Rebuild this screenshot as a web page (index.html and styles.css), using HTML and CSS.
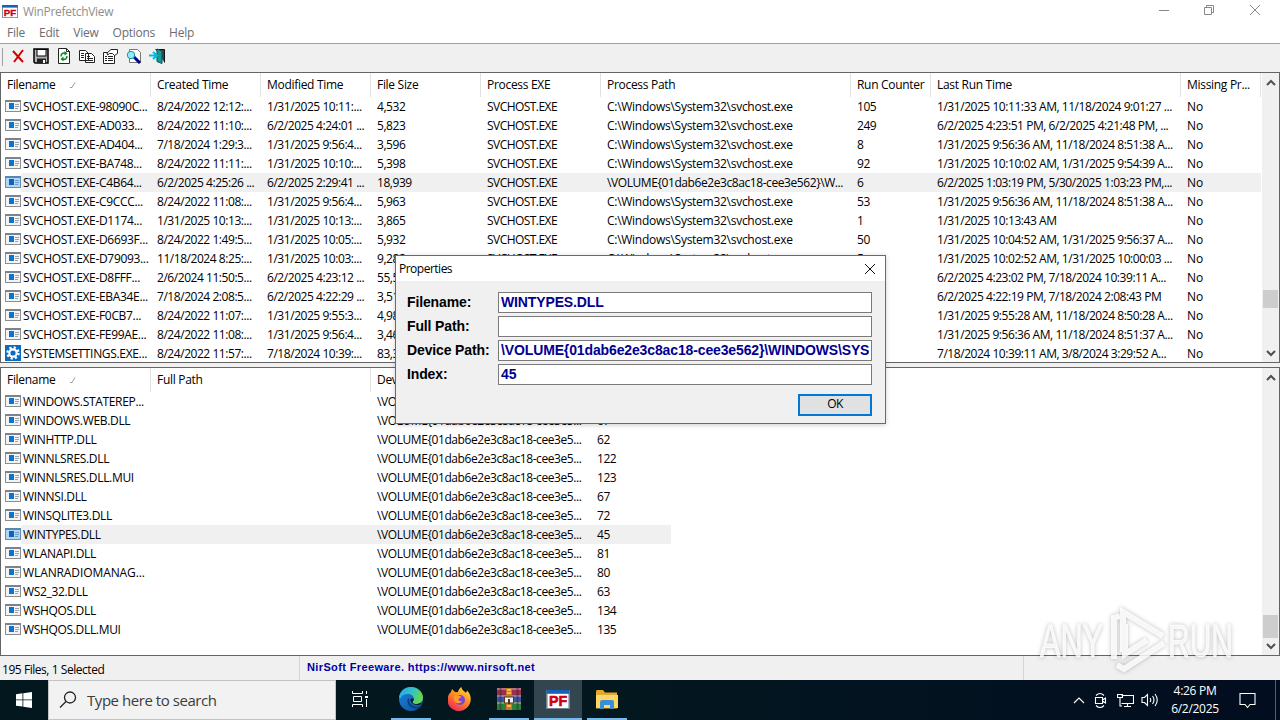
FILE: index.html
```html
<!DOCTYPE html>
<html>
<head>
<meta charset="UTF-8" />
<title>WinPrefetchView</title>
<link rel="stylesheet" href="styles.css">
</head>

<body>

<!-- shared icons -->
<svg class="defs">
<symbol id="icoPF" viewBox="0 0 24 20">
	<rect x="0" y="0" width="24" height="20" fill="#fff"/>
	<path d="M0 0h24v20h-24z" fill="none" stroke="#6f7f90" stroke-width="2"/>
	<rect x="0" y="0" width="24" height="4" fill="#1560b8"/>
	<text x="12" y="16.500" text-anchor="middle" class="pfText">PF</text>
</symbol>
<symbol id="icoApp" viewBox="0 0 16 16">
	<rect x="0.500" y="2.500" width="15" height="11" fill="#f4f4f4" stroke="#8b8f94"/>
	<path d="M0 3h16" stroke="#7d838a" stroke-width="2"/>
	<rect x="4" y="5" width="5" height="6" fill="#0a74d0"/>
	<path d="M10 6.500h4M10 8.500h4M10 10.500h3" stroke="#9aa2aa"/>
</symbol>
<symbol id="icoAppSel" viewBox="0 0 16 16">
	<rect x="0.500" y="2.500" width="15" height="11" fill="#b4d6f2" stroke="#5f8fb8"/>
	<path d="M0 3h16" stroke="#5588b4" stroke-width="2"/>
	<rect x="4" y="5" width="5" height="6" fill="#0a66bc"/>
	<path d="M10 6.500h4M10 8.500h4M10 10.500h3" stroke="#6f9cc4"/>
</symbol>
<symbol id="icoGear" viewBox="0 0 16 16">
	<rect width="16" height="16" fill="#0a6cc0"/>
	<circle cx="8" cy="8" r="5.600" fill="none" stroke="#fff" stroke-width="2.200" stroke-dasharray="2.200 2.200"/>
	<circle cx="8" cy="8" r="3.700" fill="none" stroke="#fff" stroke-width="2.200"/>
</symbol>
</svg>

<div class="window">

<div class="titleBar">
	<svg class="appIcon" width="16" height="13"><use href="#icoPF"/></svg>
	<span class="caption">WinPrefetchView</span>
	<svg class="sysButtons" width="104" height="20" fill="none" stroke="#888">
		<path d="M2 10.500h10"/>
		<path d="M47.500 7.500h7v7h-7zM49.500 7v-1.500h7v7h-2"/>
		<path d="M93 5l10 10M103 5l-10 10"/>
	</svg>
</div>

<div class="menuBar">
	<span>File</span><span>Edit</span><span>View</span><span>Options</span><span>Help</span>
</div>

<div class="toolBar">
	<div class="grip"></div>
	<!-- delete -->
	<svg width="16" height="16"><path d="M3 3l10 11M13 2L4 14" stroke="#d00000" stroke-width="2" fill="none"/></svg>
	<!-- save -->
	<svg width="16" height="16"><path d="M1 1h14v14h-13l-1-1z" fill="#b4b4b4" stroke="#000" stroke-width="1.500"/><rect x="4" y="1.500" width="9" height="6.500" fill="#fff" stroke="#000"/><rect x="4" y="10.500" width="9" height="5" fill="#222"/><rect x="10" y="12" width="2" height="3" fill="#fff"/></svg>
	<!-- refresh -->
	<svg width="16" height="16"><path d="M2.500 .5h8l3 3v12h-11z" fill="#fff" stroke="#222"/><path d="M10.500 .5v3h3" fill="none" stroke="#222"/><path d="M5 8.500c0-3 2-4 5-3M11 8c0 3-2 4-5 3" fill="none" stroke="#078a20" stroke-width="1.500"/><path d="M8.500 3l3 2.500-3 2zM7.500 8.500l-3 2.500 3 2.500z" fill="#078a20"/></svg>
	<!-- copy -->
	<svg width="16" height="16"><g fill="#fff" stroke="#222"><path d="M.5 2.500h6l3 3v7h-9zM6.500 5.500h6l3 3v6h-9z"/></g><path d="M2 5.500h3M2 7.500h3M2 9.500h3M8 8.500h3M8 10.500h6M8 12.500h6" stroke="#222"/></svg>
	<!-- properties -->
	<svg width="17" height="16"><path d="M1.500 4.500h11v11h-11z" fill="#fff" stroke="#222"/><path d="M3 8.500h2M6 8.500h5M3 10.500h2M6 10.500h5M3 12.500h2M6 12.500h5" stroke="#222"/><path d="M5 5l4-3.500h6.500v4l-3 2-2-2h-3l-2 1.500z" fill="#fff" stroke="#222"/></svg>
	<!-- find -->
	<svg width="16" height="16"><path d="M3.500 1.500h8l3 3v10h-11z" fill="#fff" stroke="#777"/><path d="M7 8l7 7" stroke="#000090" stroke-width="3"/><circle cx="5" cy="7" r="3.700" fill="#98eaf2" stroke="#1596aa"/></svg>
	<!-- exit -->
	<svg width="16" height="16"><path d="M6.500 1.500h9v13" fill="#444" stroke="#111"/><path d="M8 1l5 2v12.500l-5-2z" fill="#179a9c" stroke="#055"/><path d="M0 7.500h7M4 4l4 3.500-4 3.500" fill="none" stroke="#00bcd4" stroke-width="2"/></svg>
</div>

<div class="list listTop">
	<div class="grid">
		<div class="row head" id="headTop"></div>
		<div id="rowsTop"></div>
	</div>
	<div class="scroll">
		<svg width="16" height="17"><path d="M4 12l4-4 4 4" /></svg>
		<div class="thumb"></div>
		<svg width="16" height="17"><path d="M4 6l4 4 4-4" /></svg>
	</div>
</div>

<div class="list listBottom">
	<div class="grid">
		<div class="row head" id="headBottom"></div>
		<div id="rowsBottom"></div>
	</div>
	<div class="scroll">
		<svg width="16" height="17"><path d="M4 12l4-4 4 4" /></svg>
		<div class="thumb"></div>
		<svg width="16" height="17"><path d="M4 6l4 4 4-4" /></svg>
	</div>
</div>

<div class="statusBar">
	<div class="stCount">195 Files, 1 Selected</div>
	<div class="stLink">NirSoft Freeware. https://www.nirsoft.net</div>
	<div class="stRest"></div>
</div>

</div>

<div class="taskBar">
	<div class="start">
		<svg width="16" height="16" fill="#fff"><path d="M0 2.200l6.500-.9v6.200h-6.500zM7.300 1.200l8.700-1.200v7.500h-8.700zM0 8.300h6.500v6.300l-6.500-.9zM7.300 8.300h8.700v7.700l-8.700-1.300z"/></svg>
	</div>
	<div class="search">
		<svg width="18" height="18" fill="none" stroke="#222" stroke-width="1.300"><circle cx="11" cy="6.500" r="5.500"/><path d="M7 10.500l-6 6"/></svg>
		<span>Type here to search</span>
	</div>
	<div class="task view">
		<svg width="18" height="16" fill="none" stroke="#fff"><path d="M1.500 0v2.500h10v-2.500M1.500 16v-2.500h10v2.500M2.500 5.500h8v5h-8zM15.500 0v3M15.500 8v8"/><path d="M14 5h3v2h-3z" fill="#fff" stroke="none"/></svg>
	</div>
	<div class="task run">
		<svg width="24" height="24" viewBox="0 0 24 24">
			<defs>
				<linearGradient id="gEdge" x1="0" y1="0" x2="1" y2="0.400"><stop offset="0" stop-color="#2aa5e0"/><stop offset="0.500" stop-color="#2fc0d0"/><stop offset="1" stop-color="#62d850"/></linearGradient>
				<linearGradient id="gEdge2" x1="0" y1="0" x2="1" y2="1"><stop offset="0" stop-color="#1a86dc"/><stop offset="1" stop-color="#0d4f9e"/></linearGradient>
			</defs>
			<circle cx="12" cy="12" r="12" fill="url(#gEdge2)"/>
			<path d="M0 11c.5-6.500 5.500-11 12-11s12 5 12 10.500c0 4-3 6.500-6.500 6.500-2.500 0-4-1-4-2s1.300-1.500 1.300-3.500c0-2.500-2.500-4.500-6-4.500-4 0-6.800 2-6.800 4z" fill="url(#gEdge)"/>
			<path d="M9 11.500c-2 4 1.500 10 8 10 2 0 4-.8 5.500-2-1-.2-2 .3-4.500 .3-5 0-9-4-7.500-8z" fill="#123e78"/>
			<path d="M14.800 12c0 1.500-1.300 2.500-1.300 3.200 0 1 1.500 1.800 4 1.800 2 0 4-.8 5.200-2.200-.3 1.200-.7 2-1.200 2.800-5 1.500-10-1-10-4.500 .2-1.500 1.500-2.100 3.300-1.100z" fill="#03171f"/>
		</svg>
	</div>
	<div class="task">
		<svg width="24" height="24" viewBox="0 0 24 24">
			<defs><linearGradient id="gFox" x1="0.800" y1="0" x2="0.200" y2="1"><stop offset="0" stop-color="#ffe040"/><stop offset="0.450" stop-color="#ff8a20"/><stop offset="1" stop-color="#f0205c"/></linearGradient></defs>
			<path d="M3 5l1-3 3 3c1 0 2 0 3 .3 0-2 1.500-4 3.500-5.300 0 3 3 4 4.500 6l1-2.500c3 3 4 6 3.700 9.500-.4 6-5.500 11-11.700 11s-11.500-5-11.500-11c0-3 1-6 3.500-8z" fill="url(#gFox)"/>
			<circle cx="12" cy="13" r="5" fill="#7a45d8"/>
			<path d="M6 9c2-1.500 4-1 5.500 0l2 .5c-1 2-3 1.500-3 3 0 1.300 1.500 2 3.500 1.500-1.500 3-6 3-7.500 0-.8-1.500-1-3.500-.5-5z" fill="#ff9a28"/>
		</svg>
	</div>
	<div class="task run">
		<svg width="24" height="22" viewBox="0 0 24 22">
			<rect x="0" y="0" width="24" height="7" fill="#9c2f4c"/><rect x="0" y="7" width="24" height="7" fill="#3956a8"/><rect x="0" y="14" width="24" height="8" fill="#2e7f3c"/>
			<path d="M0 1h24M0 8h24M0 15h24" stroke="#d6b0b8" stroke-width="1"/>
			<path d="M3.500 0v22M20.500 0v22" stroke="#20242c" stroke-opacity=".4" stroke-width="2"/>
			<rect x="9" y="0" width="6" height="22" fill="#c87828"/><path d="M10 2h4M10 5h4M10 18h4" stroke="#ffd060" stroke-width="1.500"/>
			<rect x="7.500" y="9" width="9" height="6" fill="#eee" stroke="#54381c"/><path d="M11 11v5h2v-5" fill="#54381c"/>
		</svg>
	</div>
	<div class="task run active">
		<svg width="24" height="19"><use href="#icoPF"/></svg>
	</div>
	<div class="task run">
		<svg width="22" height="19" viewBox="0 0 22 19">
			<path d="M0 2q0-2 1-2h6l2 2.500h12v16h-21z" fill="#e5a82c"/><path d="M0 5h22v13h-22z" fill="#ffd668"/>
			<path d="M4 19v-7q0-2 2-2h10q2 0 2 2v7h-4v-4h-6v4z" fill="#3b8fd6"/>
		</svg>
	</div>
	<div class="tray">
		<svg width="12" height="8"><path d="M1 7l5-5 5 5"/></svg>
		<svg width="14" height="16"><path d="M1.500 5.500h7v6h-7zM8.500 8l3-2v5l-3-2M2 3.500q4-4 8 0M2 13.500q4 4 8 0"/></svg>
		<svg width="17" height="15"><path d="M4.500 2.500h12v8h-12M10.500 10.500v3M7 13.500h7M.5 1.500h5v3h-5zM3 4.500v8.500h2"/></svg>
		<svg class="vol" width="18" height="14"><path d="M1 4.500h2.500l3-3v11l-3-3h-2.500zM9 5q1.500 2 0 4M11.500 3q3 4 0 8M14 1q4.500 6 0 12"/></svg>
		<div class="clock"><div>4:26 PM</div><div>6/2/2025</div></div>
		<svg class="note" width="17" height="17"><path d="M1 1.500h15v11h-5l-2.500 3-2.500-3h-5z"/></svg>
		<div class="peek"></div>
	</div>
</div>

<!-- watermark, over the window -->
<svg class="mark" width="210" height="76">
	<g class="markText">
		<text x="3" y="55" textLength="63" lengthAdjust="spacingAndGlyphs">ANY</text>
		<text x="131" y="55" textLength="65" lengthAdjust="spacingAndGlyphs">RUN</text>
	</g>
	<path class="markLogo" d="M77 57V16l6-2M86 50V10L126 34M88 22V52L110 38M127 41L87 67l-7-4"/>
</svg>

<!-- properties dialog -->
<div class="dialog">
	<div class="dlgTitle"><span>Properties</span><svg width="12" height="12"><path d="M1 1l10 10M11 1L1 11" stroke="#111" fill="none"/></svg></div>
	<div class="dlgBody">
		<div class="field"><label>Filename:</label><div class="box">WINTYPES.DLL</div></div>
		<div class="field"><label>Full Path:</label><div class="box"></div></div>
		<div class="field"><label>Device Path:</label><div class="box">\VOLUME{01dab6e2e3c8ac18-cee3e562}\WINDOWS\SYS</div></div>
		<div class="field"><label>Index:</label><div class="box">45</div></div>
		<button>OK</button>
	</div>
</div>

<script src="lists.js"></script>
</body>
</html>
```
FILE: styles.css
```css
body{
margin: 0;
width: 1280px;
height: 720px;
overflow: hidden;
background: #fff;
color: #000;
font: 12px/19px "Open Sans", "Noto Sans", sans-serif;
}

.defs{
position: absolute;
width: 0;
height: 0;
}

.pfText{
font: bold 15px "Liberation Sans", sans-serif;
letter-spacing: 0;
fill: #d00010;
stroke: #d00010;
stroke-width: .6px;
}

.window{
height: 680px;
display: flex;
flex-direction: column;
}

/* title + menu */
.titleBar{
height: 23px;
display: flex;
align-items: center;
color: #8f8f8f;
}

.appIcon{
margin-left: 2px;
}

.caption{
margin-left: 5px;
letter-spacing: -.3px;
}

.sysButtons{
margin-left: auto;
margin-right: 19px;
margin-bottom: 3px;
}

.menuBar{
height: 20px;
display: flex;
gap: 14px;
padding-left: 7px;
color: #6d6d6d;
letter-spacing: -.25px;
border-bottom: 1px solid #a0a0a0;
}

.toolBar{
height: 28px;
display: flex;
gap: 7px;
background: #f0f0f0;
padding-top: 4px;
box-sizing: border-box;
}

.grip{
width: 1px;
height: 18px;
margin-left: 2px;
background: #a0a0a0;
}

/* lists */
.list{
display: flex;
box-sizing: border-box;
border: 1px solid #646464;
background: #fff;
overflow: hidden;
}

.listTop{
height: 291px;
}

.listBottom{
height: 289px;
margin-top: 4px;
outline: 4px solid #f0f0f0;
}

.grid{
width: 1261px;
}

.row{
display: flex;
height: 19px;
}

.row.sel .cell{
background: #f0f0f0;
}

.row.sel .cell:first-child{
background: linear-gradient(90deg, #fff 20px, #f0f0f0 20px);
}

.row.head{
height: 24px;
line-height: 24px;
letter-spacing: -.3px;
}

.cell{
box-sizing: border-box;
padding-left: 6px;
white-space: pre;
overflow: hidden;
flex: none;
}

.row.head .cell{
border-right: 1px solid #e2e2e2;
}

.row.head svg{
margin-left: 12px;
}

.name{
display: flex;
align-items: center;
gap: 2px;
padding-left: 4px;
}

.name svg{
margin-top: -1px;
}

.head .name{
padding-left: 6px;
}

.scroll{
width: 17px;
display: flex;
flex-direction: column;
align-items: center;
background: #f0f0f0;
}

.scroll svg{
fill: none;
stroke: #505050;
stroke-width: 2;
}

.thumb{
width: 15px;
background: #cdcdcd;
margin-bottom: auto;
}

.listTop .thumb{
margin-top: 200px;
height: 18px;
}

.listBottom .thumb{
margin-top: 230px;
height: 23px;
}

/* status */
.statusBar{
height: 24px;
display: flex;
background: #f0f0f0;
}

.stCount{
width: 297px;
padding: 4px 0 0 2px;
border-right: 1px solid #d4d4d4;
letter-spacing: -.45px;
}

.stLink{
width: 716px;
padding-left: 7px;
border-right: 1px solid #d4d4d4;
font: bold 11px/22px "Liberation Sans", sans-serif;
letter-spacing: .37px;
color: #0000a8;
}

/* taskbar */
.taskBar{
height: 40px;
display: flex;
background: linear-gradient(90deg, #03171f 50%, #020d20);
}

.start{
width: 48px;
display: flex;
align-items: center;
justify-content: center;
}

.search{
width: 288px;
box-sizing: border-box;
border: 1px solid #c4c4c4;
background: #f2f2f2;
color: #3c3c3c;
display: flex;
align-items: center;
gap: 10px;
padding-left: 10px;
font-size: 15px;
letter-spacing: -.45px;
}

.task{
width: 48px;
margin-right: 1px;
box-sizing: border-box;
border-bottom: 2px solid transparent;
display: flex;
align-items: center;
justify-content: center;
}

.task.view{
margin-right: 3px;
}

.run{
background: linear-gradient(#76b9ed, #76b9ed) bottom / 40px 2px no-repeat border-box;
}

.run.active{
background-size: 48px 2px;
background-color: #33454f;
}

.tray{
margin-left: auto;
display: flex;
align-items: center;
color: #fff;
}

.tray svg{
fill: none;
stroke: #fff;
stroke-width: 1.1;
margin-right: 9px;
}

.tray .vol{
margin-left: -2px;
margin-right: 7px;
}

.clock{
width: 58px;
text-align: center;
line-height: 18px;
letter-spacing: -.3px;
}

.tray .note{
margin: 0 19px 0 15px;
}

.peek{
width: 4px;
height: 40px;
border-left: 1px solid #56606c;
}

/* watermark */
.mark{
position: absolute;
left: 1037px;
top: 602px;
filter: drop-shadow(0 0 2px rgba(0,0,0,.3));
}

.markText{
font: 47px "Liberation Sans", sans-serif;
fill: #fff;
fill-opacity: .8;
stroke: #fff;
stroke-opacity: .8;
}

.markLogo{
fill: none;
stroke: #fff;
stroke-opacity: .85;
stroke-width: 6;
}

/* dialog */
.dialog{
position: absolute;
left: 395px;
top: 255px;
width: 491px;
height: 169px;
box-sizing: border-box;
border: 1px solid #6a6a6a;
background: #f0f0f0;
box-shadow: 0 1px 5px rgba(0,0,0,.2);
}

.dlgTitle{
height: 25px;
display: flex;
align-items: center;
justify-content: space-between;
padding: 0 9px 0 3px;
background: #fff;
letter-spacing: -.5px;
line-height: 23px;
}

.dlgTitle span{
margin-top: -1px;
}

.dlgBody{
display: flex;
flex-direction: column;
gap: 3px;
padding: 11px 13px 0 11px;
font: bold 14px/21px "Liberation Sans", sans-serif;
letter-spacing: -.13px;
}

.field{
display: flex;
height: 21px;
}

.field label{
width: 91px;
flex: none;
}

.box{
flex: 1;
min-width: 0;
box-sizing: border-box;
border: 1px solid #7a7a7a;
background: #fff;
color: #000090;
padding: 0 2px;
line-height: 19px;
white-space: nowrap;
overflow: clip;
overflow-clip-margin: content-box;
}

.dlgBody button{
align-self: flex-end;
width: 74px;
height: 22px;
margin-top: 6px;
padding: 0 0 2px;
border: 2px solid #0078d7;
background: #e1e1e1;
font: 12px/16px "Open Sans", sans-serif;
letter-spacing: -.5px;
}
```
FILE: lists.js
```js
var P = "C:\\Windows\\System32\\svchost.exe";
var S = "SVCHOST.EXE";
var V = "\\VOLUME{01dab6e2e3c8ac18-cee3e5...";

var topCols = [150, 110, 110, 110, 120, 250, 80, 250, 80];
var topHead = ["Filename", "Created Time", "Modified Time", "File Size", "Process EXE", "Process Path", "Run Counter", "Last Run Time", "Missing Pr..."];
var topRows = [
["SVCHOST.EXE-98090C...", "8/24/2022 12:12:...", "1/31/2025 10:11:...", "4,532", S, P, "105", "1/31/2025 10:11:33 AM, 11/18/2024 9:01:27 ...", "No"],
["SVCHOST.EXE-AD033...", "8/24/2022 11:10:...", "6/2/2025 4:24:01 ...", "5,823", S, P, "249", "6/2/2025 4:23:51 PM, 6/2/2025 4:21:48 PM, ...", "No"],
["SVCHOST.EXE-AD404...", "7/18/2024 1:29:3...", "1/31/2025 9:56:4...", "3,596", S, P, "8", "1/31/2025 9:56:36 AM, 11/18/2024 8:51:38 A...", "No"],
["SVCHOST.EXE-BA748...", "8/24/2022 11:11:...", "1/31/2025 10:10:...", "5,398", S, P, "92", "1/31/2025 10:10:02 AM, 1/31/2025 9:54:39 A...", "No"],
["SVCHOST.EXE-C4B64...", "6/2/2025 4:25:26 ...", "6/2/2025 2:29:41 ...", "18,939", S, "\\VOLUME{01dab6e2e3c8ac18-cee3e562}\\W...", "6", "6/2/2025 1:03:19 PM, 5/30/2025 1:03:23 PM,...", "No"],
["SVCHOST.EXE-C9CCC...", "8/24/2022 11:08:...", "1/31/2025 9:56:4...", "5,963", S, P, "53", "1/31/2025 9:56:36 AM, 11/18/2024 8:51:38 A...", "No"],
["SVCHOST.EXE-D1174...", "1/31/2025 10:13:...", "1/31/2025 10:13:...", "3,865", S, P, "1", "1/31/2025 10:13:43 AM", "No"],
["SVCHOST.EXE-D6693F...", "8/24/2022 1:49:5...", "1/31/2025 10:05:...", "5,932", S, P, "50", "1/31/2025 10:04:52 AM, 1/31/2025 9:56:37 A...", "No"],
["SVCHOST.EXE-D79093...", "11/18/2024 8:25:...", "1/31/2025 10:03:...", "9,282", S, P, "5", "1/31/2025 10:02:52 AM, 1/31/2025 10:00:03 ...", "No"],
["SVCHOST.EXE-D8FFF...", "2/6/2024 11:50:5...", "6/2/2025 4:23:12 ...", "55,5", "", "", "", "6/2/2025 4:23:02 PM, 7/18/2024 10:39:11 A...", "No"],
["SVCHOST.EXE-EBA34E...", "7/18/2024 2:08:5...", "6/2/2025 4:22:29 ...", "3,51", "", "", "", "6/2/2025 4:22:19 PM, 7/18/2024 2:08:43 PM", "No"],
["SVCHOST.EXE-F0CB7...", "8/24/2022 11:07:...", "1/31/2025 9:55:3...", "4,98", "", "", "", "1/31/2025 9:55:28 AM, 11/18/2024 8:50:28 A...", "No"],
["SVCHOST.EXE-FE99AE...", "8/24/2022 11:08:...", "1/31/2025 9:56:4...", "3,46", "", "", "", "1/31/2025 9:56:36 AM, 11/18/2024 8:51:37 A...", "No"],
["SYSTEMSETTINGS.EXE...", "8/24/2022 11:57:...", "7/18/2024 10:39:...", "83,3", "", "", "", "7/18/2024 10:39:11 AM, 3/8/2024 3:29:52 A...", "No"]
];

var botCols = [150, 220, 220, 80];
var botHead = ["Filename", "Full Path", "Device Path", "Index"];
var botRows = [
["WINDOWS.STATEREP...", "", V, ""],
["WINDOWS.WEB.DLL", "", V, "67"],
["WINHTTP.DLL", "", V, "62"],
["WINNLSRES.DLL", "", V, "122"],
["WINNLSRES.DLL.MUI", "", V, "123"],
["WINNSI.DLL", "", V, "67"],
["WINSQLITE3.DLL", "", V, "72"],
["WINTYPES.DLL", "", V, "45"],
["WLANAPI.DLL", "", V, "81"],
["WLANRADIOMANAG...", "", V, "80"],
["WS2_32.DLL", "", V, "63"],
["WSHQOS.DLL", "", V, "134"],
["WSHQOS.DLL.MUI", "", V, "135"]
];

// letter spacing by kind of text
function spacing(t){
if (t == S) return -0.55;
if (t == "No") return 0;
if (t.indexOf("WLANR") == 0) return -0.1;
if (/^[A-Z][A-Z0-9_.\-]+$/.test(t)) return -0.33;
if (t.charAt(0) == "\\") return -0.42;
if (t.charAt(0) == "C") return -0.27;
return -0.45;
}

function addCells(oRow, arr, cols, isHead, isSel){
for (var i = 0; i < arr.length; i++){
	var c = document.createElement("div");
	c.className = i == 0 ? "cell name" : "cell";
	c.style.width = cols[i] + "px";
	if (!isHead) c.style.letterSpacing = spacing(arr[i]) + "px";
	if (i == 0 && !isHead){
		var ico = arr[0].indexOf("SYSTEMS") == 0 ? "icoGear" : "icoApp";
		if (isSel) ico = "icoAppSel";
		c.innerHTML = '<svg width="16" height="16"><use href="#' + ico + '"/></svg>';
	}
	var s = document.createElement("span");
	s.textContent = arr[i];
	c.appendChild(s);
	if (i == 0 && isHead)
		c.insertAdjacentHTML("beforeend", '<svg width="7" height="6"><path d="M1 5.5h2l3-5" fill="none" stroke="#999"/></svg>');
	oRow.appendChild(c);
}
}

function fillList(id, rows, cols, sel){
var o = document.getElementById(id);
for (var i = 0; i < rows.length; i++){
	var r = document.createElement("div");
	r.className = i == sel ? "row sel" : "row";
	addCells(r, rows[i], cols, false, i == sel);
	o.appendChild(r);
}
}

addCells(document.getElementById("headTop"), topHead, topCols, true, false);
addCells(document.getElementById("headBottom"), botHead, botCols, true, false);
fillList("rowsTop", topRows, topCols, 4);
fillList("rowsBottom", botRows, botCols, 7);
```
